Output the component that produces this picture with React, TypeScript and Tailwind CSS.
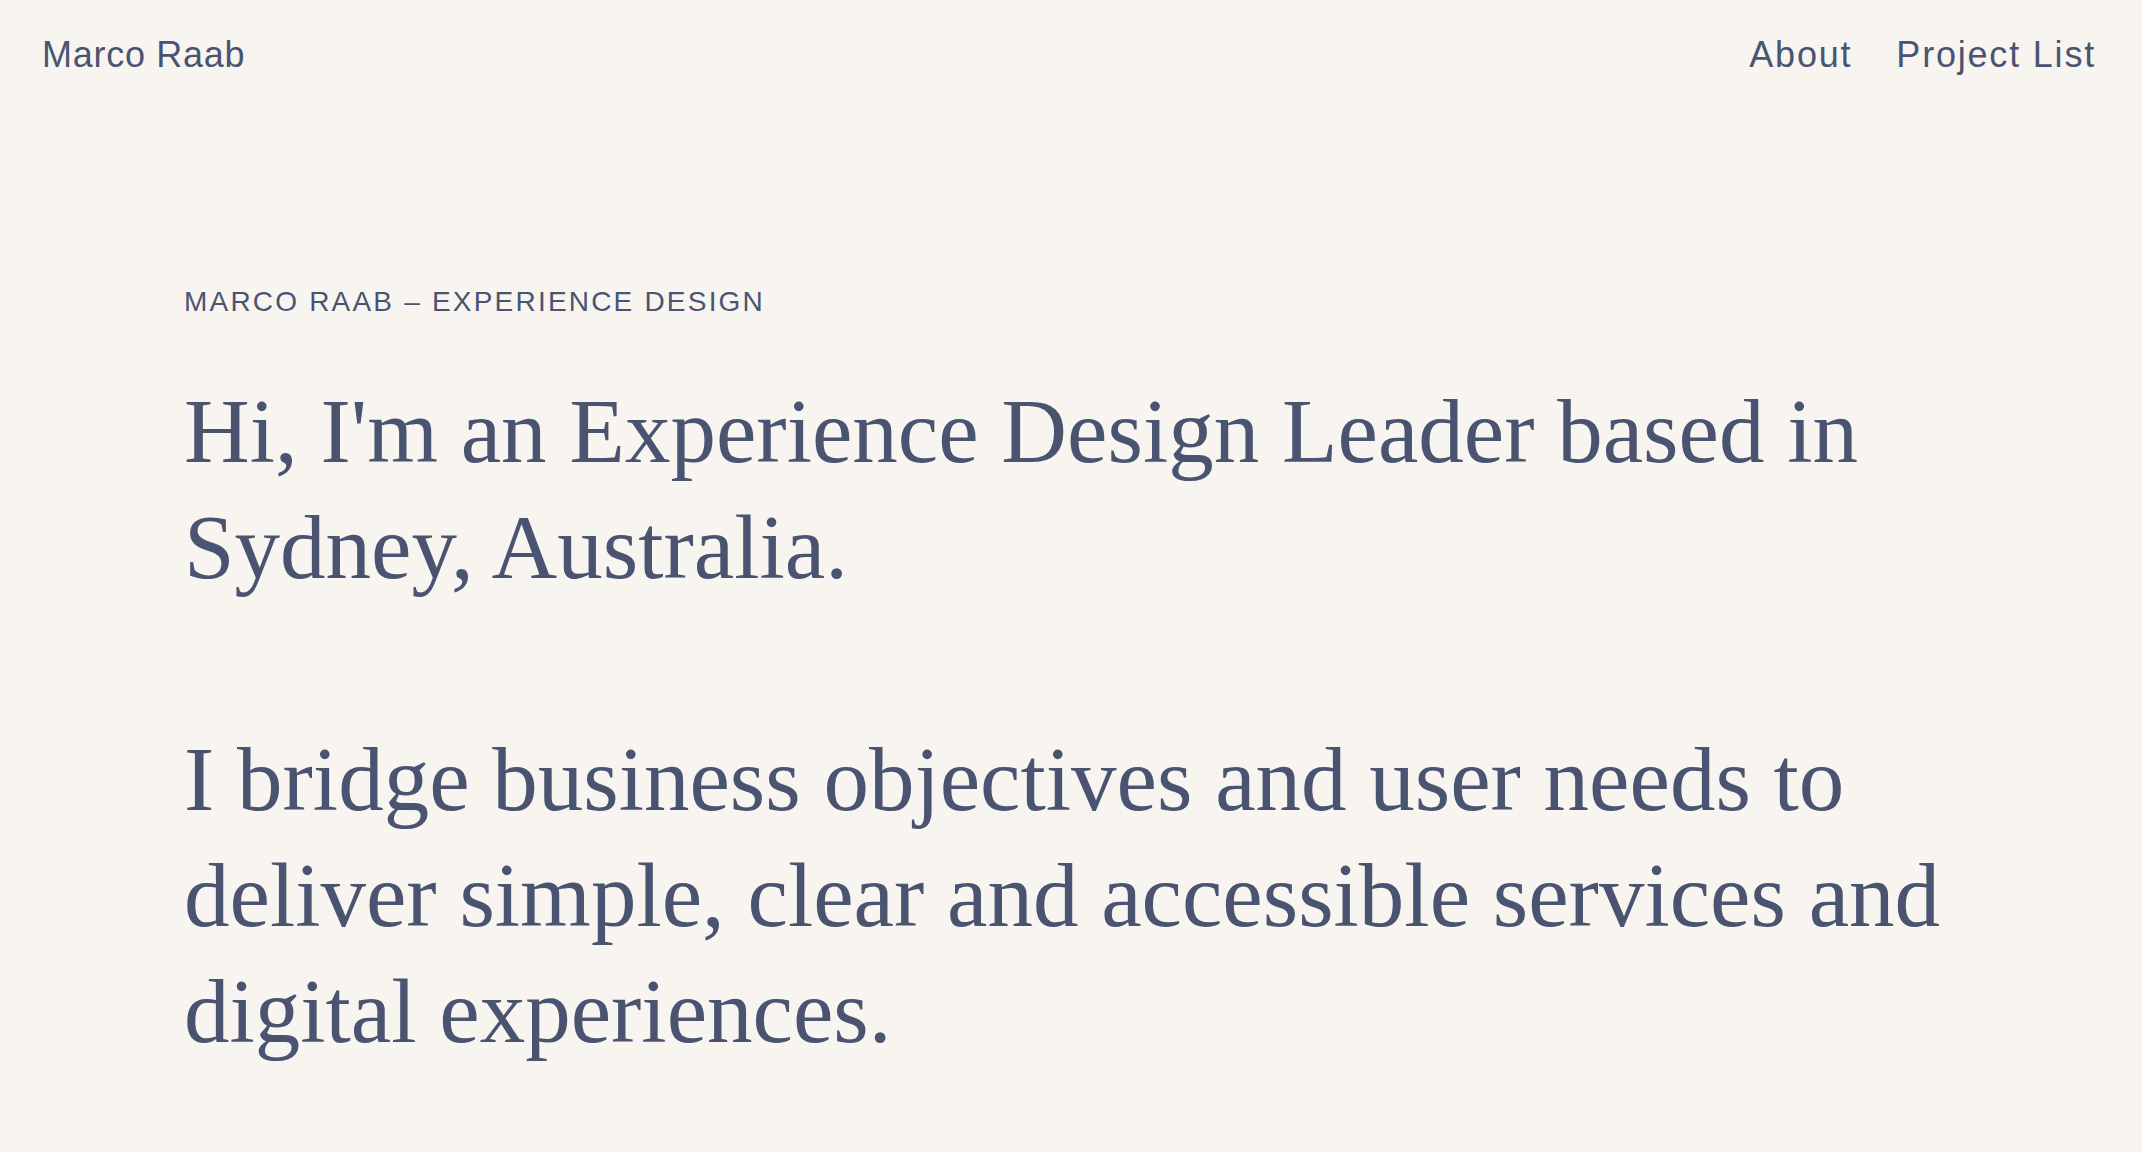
export default function App() {
  return (
    <div className="min-h-screen bg-[#f8f5f1] text-[#4a5471]">
      {/* Top bar */}
      <header className="flex items-center justify-between pl-[42px] pr-[46px] pt-[28px] font-['Liberation_Sans',Arial,sans-serif] text-[36px] leading-[54px]">
        <a href="#" className="tracking-[0.02em] hover:opacity-80">
          Marco Raab
        </a>
        <nav className="flex items-center gap-[44px] tracking-[0.05em]">
          <a href="#" className="hover:opacity-80">
            About
          </a>
          <a href="#" className="hover:opacity-80">
            Project List
          </a>
        </nav>
      </header>

      <main className="pl-[184px] pt-[202px] pb-[30px]">
        <p className="font-['Liberation_Sans',Arial,sans-serif] text-[28px] leading-[36px] tracking-[2.2px] uppercase">
          Marco Raab – Experience Design
        </p>

        <div className="mt-[54px] max-w-[1790px] font-['Liberation_Serif','Times_New_Roman',serif] text-[91px] leading-[116px]">
          <h1>Hi, I'm an Experience Design Leader based in Sydney, Australia.</h1>
          <p className="mt-[116px]">
            I bridge business objectives and user needs to deliver simple, clear and accessible services and digital
            experiences.
          </p>
        </div>
      </main>
    </div>
  );
}
